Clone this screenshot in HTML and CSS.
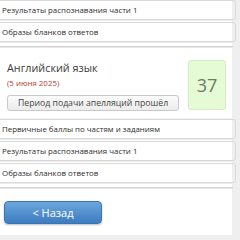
FILE: index.html
```html
<!DOCTYPE html>
<html lang="ru">

<head>
    <meta charset="UTF-8">
    <meta name="viewport" content="width=device-width, initial-scale=1.0">
    <title>Результаты экзаменов</title>
    <link rel="stylesheet" href="styles.css">
</head>

<body>
    <div id="page">
        <ul class="links">
            <li><a href="#">Результаты распознавания части 1</a></li>
            <li><a href="#">Образы бланков ответов</a></li>
        </ul>
        <div class="separator"></div>

        <div class="exam">
            <div class="exam-info">
                <div class="exam-title">Английский язык</div>
                <div class="exam-date">(5 июня 2025)</div>
                <span class="appeal">Период подачи апелляций прошёл</span>
            </div>
            <div class="score">37</div>
        </div>
        <ul class="links">
            <li><a href="#">Первичные баллы по частям и заданиям</a></li>
            <li><a href="#">Результаты распознавания части 1</a></li>
            <li><a href="#">Образы бланков ответов</a></li>
        </ul>
        <div class="separator"></div>

        <a href="#" class="back">&lt; Назад</a>
    </div>
</body>

</html>
```

FILE: styles.css
```css
html {
    font-family: "Open Sans", "Noto Sans", sans-serif;
    background: #efefef;
}

body {
    margin: 0;
}

#page {
    width: 235px;
    margin-left: -3px;
    padding-bottom: 11px;
    background: #fff;
}

#page .links {
    list-style: none;
    margin: 0 -4px 0 0;
    padding: 0;
}

#page .links li {
    margin-bottom: 2px;
}

#page .links li:last-child {
    margin-bottom: 0;
}

#page .links li a {
    display: block;
    height: 18px;
    line-height: 18px;
    padding-left: 4px;
    border: 1px solid #d9d9d9;
    border-radius: 3px;
    box-shadow: 0 1px 0 #ececec;
    font-size: 7.9px;
    color: #2e2e2e;
    text-decoration: none;
    white-space: nowrap;
}

#page .separator {
    margin: 4px -1px 0 0;
    border-top: 1px solid #d2d2d2;
    border-bottom: 1px solid #e9e9e9;
}

#page .exam {
    display: flex;
    justify-content: space-between;
    padding: 12px 6px 7px 10px;
    border-bottom: 1px solid #f0f0f0;
}

#page .exam-title {
    font-size: 10.8px;
    line-height: 16px;
    color: #3a3a3a;
}

#page .exam-date {
    margin-top: 2px;
    font-size: 7.9px;
    line-height: 11px;
    color: #c0392b;
}

#page .appeal {
    display: inline-block;
    margin-top: 5px;
    height: 14px;
    line-height: 14px;
    padding: 0 10px;
    border: 1px solid #c9c9c9;
    border-radius: 3px;
    background: linear-gradient(#fbfbfb, #ececec);
    font-size: 8.7px;
    color: #444;
    white-space: nowrap;
}

#page .score {
    width: 36px;
    height: 48px;
    line-height: 48px;
    text-align: center;
    border: 1px solid #d3edc3;
    border-radius: 3px;
    background: #e4fbd6;
    font-size: 18px;
    color: #6b7d5e;
}

#page .back {
    display: block;
    width: 96px;
    height: 21px;
    line-height: 21px;
    margin: 12px 0 0 7px;
    border: 1px solid #3b74b3;
    border-radius: 4px;
    background: linear-gradient(#6ba6dd, #3c7cc0);
    box-shadow: 0 1px 2px rgba(0, 0, 0, 0.25);
    font-size: 11px;
    text-align: center;
    color: #fff;
    text-decoration: none;
}
```
